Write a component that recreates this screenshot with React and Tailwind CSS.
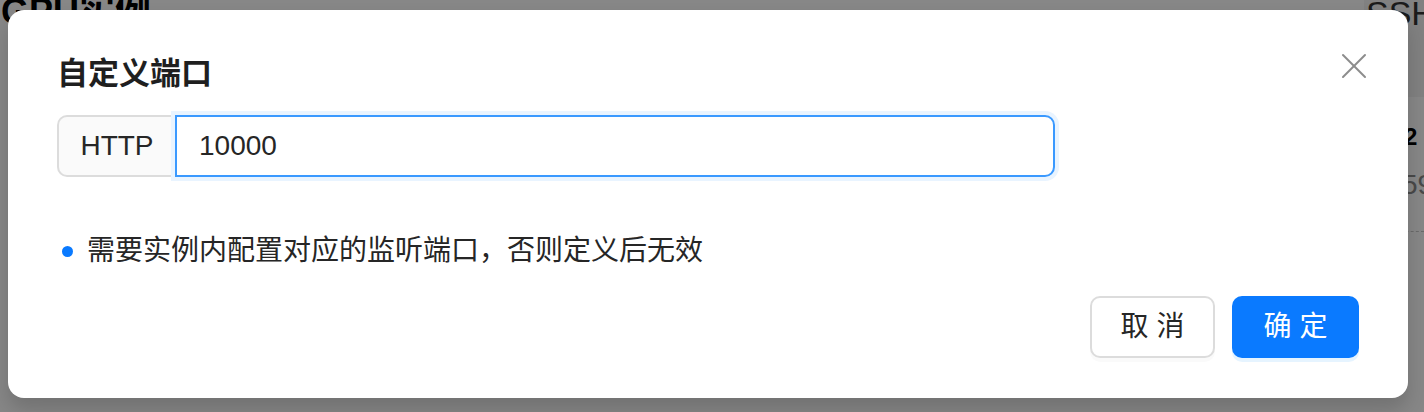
import { useState } from "react"

const FONT = { fontFamily: '"Liberation Sans", "Noto Sans CJK SC", sans-serif' }

const CloseIcon = () => (
  <svg width="26" height="26" viewBox="0 0 26 26" fill="none" stroke="#8c8c8c" strokeWidth="2" strokeLinecap="round">
    <path d="M2 2 L24 24" />
    <path d="M24 2 L2 24" />
  </svg>
)

const BackgroundPage = () => (
  <div className="flex h-full bg-white">
    <div className="flex-1">
      <div className="-mt-[6px] ml-px text-[36px] font-bold leading-[36px] text-black">GPU实例</div>
    </div>
    <div className="flex w-[60px] flex-col">
      <div className="h-[97px] bg-[#f3f3f3]">
        <div className="-mt-[4px] pl-[2px] text-[34px] leading-[34px] text-[#333]">SSH</div>
      </div>
      <div className="pl-[40px] pt-[26px] text-[24px] font-bold leading-[28px] text-black">2</div>
      <div className="pl-[38px] pt-[18px] text-[28px] leading-[32px] text-[#8a8a8a]">59</div>
      <div className="mt-[30px] border-t border-dashed border-[#c8c8c8]" />
    </div>
  </div>
)

export default function App() {
  const [port, setPort] = useState("10000")

  return (
    <div className="relative h-[412px] w-[1424px] overflow-hidden" style={FONT}>
      <BackgroundPage />
      <div className="absolute inset-0 bg-black/[0.47]" />

      <div className="absolute left-2 top-[10px] flex h-[388px] w-[1400px] flex-col rounded-[16px] bg-white pb-[40px] pl-[49px] pr-[49px] pt-[44px] shadow-[0_12px_20px_rgba(0,0,0,0.16)]">
        <div className="flex items-start justify-between">
          <h2 className="text-[31px] font-bold leading-[40px] text-[#1f1f1f]">自定义端口</h2>
          <button className="-mr-[8px] mt-[-1px]">
            <CloseIcon />
          </button>
        </div>

        <div className="mt-[21px] flex h-[62px] w-[998px]">
          <div className="flex w-[118px] items-center justify-center rounded-l-[10px] border-y-2 border-l-2 border-[#dcdcdc] bg-[#fafafa] text-[28px] text-[#262626]">
            HTTP
          </div>
          <input
            value={port}
            onChange={(e) => setPort(e.target.value)}
            className="flex-1 rounded-r-[10px] border-2 border-[#3a99ff] bg-white pl-[22px] text-[28px] text-[#262626] shadow-[0_0_0_4px_#e9f4ff] outline-none"
          />
        </div>

        <div className="mt-[54px] flex items-center gap-[14px] text-[28px] leading-[40px] text-[#262626]">
          <span className="ml-[5px] h-[11px] w-[11px] rounded-full bg-[#0a7aff]" />
          <span>需要实例内配置对应的监听端口，否则定义后无效</span>
        </div>

        <div className="mt-auto flex justify-end gap-[17px]">
          <button className="h-[62px] w-[125px] rounded-[10px] border-2 border-[#dcdcdc] bg-white text-[28px] text-[#262626] shadow-[0_4px_0_rgba(0,0,0,0.02)]">
            取 消
          </button>
          <button className="h-[62px] w-[127px] rounded-[10px] bg-[#0a7aff] text-[28px] text-white shadow-[0_4px_0_rgba(5,145,255,0.1)]">
            确 定
          </button>
        </div>
      </div>
    </div>
  )
}
